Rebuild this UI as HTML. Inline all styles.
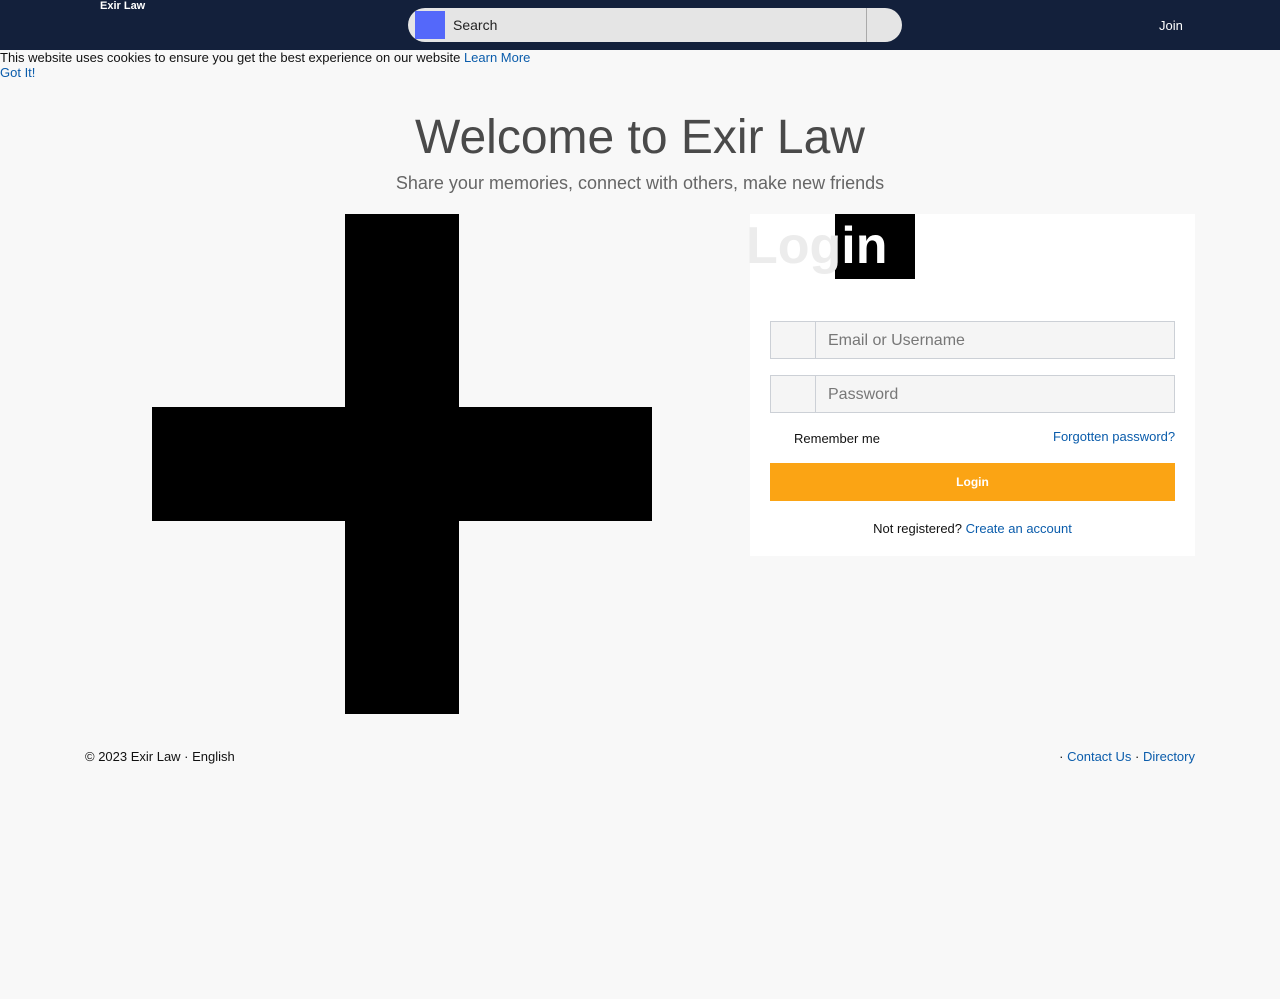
<!DOCTYPE html>
<html><head><meta charset="utf-8"><style>
*{margin:0;padding:0;box-sizing:border-box}
body{width:1280px;height:999px;background:#f8f8f8;font-family:"Liberation Sans",sans-serif;position:relative;overflow:hidden}
.nav{position:absolute;left:0;top:0;width:1280px;height:50px;background:#13203b}
.a{position:absolute;white-space:nowrap}
a{color:#0a5cab;text-decoration:none}
</style></head><body>
<div class="nav">
<div class="a" style="left:100px;top:0;color:#fff;font-weight:bold;font-size:11px">Exir Law</div>
<div class="a" style="left:408px;top:8px;width:494px;height:34px;background:#e5e5e5;border-radius:17px"></div>
<div class="a" style="left:866px;top:8px;width:1px;height:34px;background:#aaa"></div>
<div class="a" style="left:415px;top:11px;width:30px;height:28px;background:#5468fa"></div>
<div class="a" style="left:453px;top:17px;font-size:14px;color:#222">Search</div>
<div class="a" style="left:1159px;top:18px;font-size:13px;color:#fff">Join</div>
</div>
<div class="a" style="left:0;top:50px;font-size:13px;color:#111">This website uses cookies to ensure you get the best experience on our website <a>Learn More</a></div>
<div class="a" style="left:0;top:65px;font-size:13px"><a>Got It!</a></div>
<div class="a" style="left:0;width:1280px;top:110px;text-align:center;font-size:48px;color:#4a4a4a">Welcome to Exir Law</div>
<div class="a" style="left:0;width:1280px;top:173px;text-align:center;font-size:18px;color:#666">Share your memories, connect with others, make new friends</div>
<div class="a" style="left:345px;top:214px;width:114px;height:500px;background:#000"></div>
<div class="a" style="left:152px;top:407px;width:500px;height:114px;background:#000"></div>
<div class="a" style="left:750px;top:214px;width:445px;height:342px;background:#fff"></div>
<div class="a" style="left:835px;top:214px;width:80px;height:65px;background:#000"></div>
<div class="a" style="left:746px;top:214px;font-size:52px;font-weight:bold;line-height:64px;color:#ececec">Log<span style="color:#fff">in</span></div>
<div class="a" style="left:770px;top:321px;width:405px;height:38px;border:1px solid #ccd0d6;background:#f5f5f5"></div>
<div class="a" style="left:815px;top:322px;width:1px;height:36px;background:#ccd0d6"></div>
<div class="a" style="left:828px;top:332px;font-size:16px;color:#777">Email or Username</div>
<div class="a" style="left:770px;top:375px;width:405px;height:38px;border:1px solid #ccd0d6;background:#f5f5f5"></div>
<div class="a" style="left:815px;top:376px;width:1px;height:36px;background:#ccd0d6"></div>
<div class="a" style="left:828px;top:386px;font-size:16px;color:#777">Password</div>
<div class="a" style="left:794px;top:431px;font-size:13px;color:#111">Remember me</div>
<div class="a" style="left:1053px;top:429px;font-size:13px"><a>Forgotten password?</a></div>
<div class="a" style="left:770px;top:463px;width:405px;height:38px;background:#fba414;color:#fff;font-weight:bold;font-size:12px;text-align:center;line-height:38px">Login</div>
<div class="a" style="left:750px;width:445px;top:521px;text-align:center;font-size:13px;color:#111">Not registered? <a>Create an account</a></div>
<div class="a" style="left:85px;top:749px;font-size:13px;color:#111">© 2023 Exir Law · English</div>
<div class="a" style="right:85px;top:749px;font-size:13px;color:#111">· <a>Contact Us</a> · <a>Directory</a></div>
</body></html>
